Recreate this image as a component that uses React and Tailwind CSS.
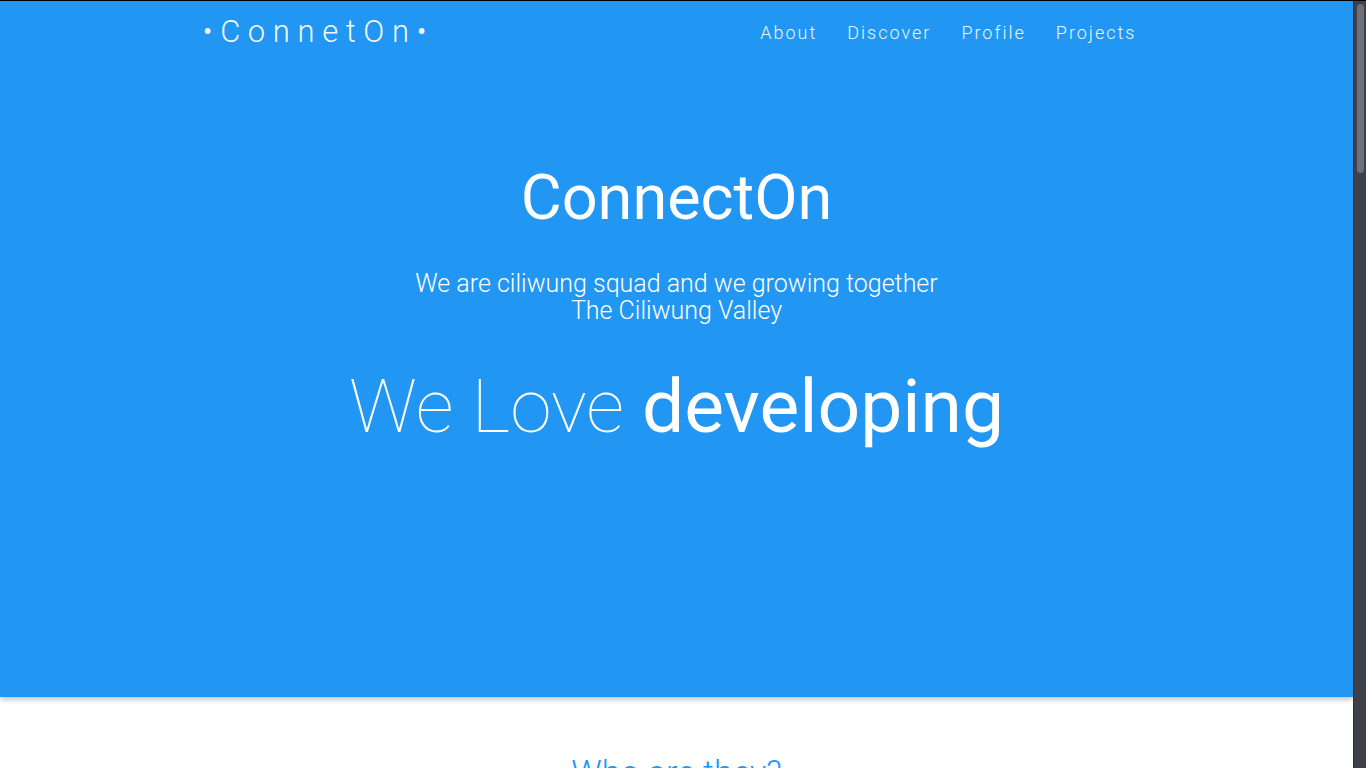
const links = ['About', 'Discover', 'Profile', 'Projects']

const members = [
  { name: 'Andi Pratama', role: 'Front-end Developer' },
  { name: 'Budi Santoso', role: 'Back-end Developer' },
  { name: 'Citra Lestari', role: 'UI/UX Designer' },
  { name: 'Dimas Saputra', role: 'Mobile Developer' },
  { name: 'Eka Wulandari', role: 'Project Manager' },
  { name: 'Fajar Nugroho', role: 'DevOps Engineer' },
]

const projects = [
  'Ciliwung Market',
  'Valley Chat',
  'Squad Tracker',
  'River Map',
  'Open Notes',
  'Grow Together',
]

const App = () => {
  return (
    <div className="flex h-screen flex-col bg-black font-['Roboto',sans-serif]">
      <div className="h-px shrink-0 bg-black" />
      <div className="flex min-h-0 flex-1">
        <div className="flex-1 overflow-y-scroll bg-white [scrollbar-width:none]">
          {/* hero */}
          <header className="relative z-10 h-[696px] bg-[#2196f3] text-white shadow-[0_2px_6px_rgba(0,0,0,0.28)]">
            <nav className="mx-auto flex h-[63px] w-[970px] items-center justify-between pr-[10px] pl-[11px]">
              <a className="text-[31px] font-light tracking-[7.6px] text-white/95">•ConnetOn•</a>
              <ul className="flex">
                {links.map((l) => (
                  <li key={l} className="px-[15px] text-[18px] font-light tracking-[2px] text-white/90">
                    {l}
                  </li>
                ))}
              </ul>
            </nav>

            <div className="flex flex-col items-center pt-[99px] text-center">
              <h1 className="text-[63px] leading-[70px] font-normal">ConnectOn</h1>
              <p className="mt-[38px] text-[25px] leading-[26.5px] font-light">
                We are ciliwung squad and we growing together
                <br />
                The Ciliwung Valley
              </p>
              <h2 className="mt-[41px] text-[75px] leading-[82px]">
                <span className="font-thin">We Love </span>
                <span className="font-normal">developing</span>
              </h2>
            </div>
          </header>

          {/* who */}
          <section className="pt-[56px] pb-24">
            <h2 className="text-center text-[34px] leading-[38px] font-light text-[#2196f3]">Who are they?</h2>
            <p className="mx-auto mt-6 w-[640px] text-center text-[16px] leading-7 font-light text-gray-600">
              A small group of friends from the banks of the Ciliwung river who love to code, design and build
              things together.
            </p>
            <div className="mx-auto mt-16 grid w-[970px] grid-cols-3 gap-8 px-[15px]">
              {members.map((m) => (
                <div key={m.name} className="flex flex-col items-center rounded bg-white p-8 shadow-[0_1px_4px_rgba(0,0,0,0.2)]">
                  <div className="h-32 w-32 rounded-full bg-[#bbdefb]" />
                  <h3 className="mt-6 text-[22px] font-normal text-gray-800">{m.name}</h3>
                  <p className="mt-1 text-[15px] font-light text-gray-500">{m.role}</p>
                </div>
              ))}
            </div>
          </section>

          {/* discover */}
          <section className="bg-[#f5f5f5] py-24">
            <h2 className="text-center text-[34px] leading-[38px] font-light text-[#2196f3]">Discover</h2>
            <div className="mx-auto mt-14 grid w-[970px] grid-cols-2 gap-10 px-[15px]">
              {['Learn', 'Share', 'Build', 'Grow'].map((t) => (
                <div key={t} className="h-[220px] rounded bg-white p-8 shadow-[0_1px_4px_rgba(0,0,0,0.15)]">
                  <h3 className="text-[24px] font-light text-gray-800">{t}</h3>
                  <p className="mt-4 text-[15px] leading-7 font-light text-gray-500">
                    Together we learn new things every week and share what we know with the rest of the squad.
                  </p>
                </div>
              ))}
            </div>
          </section>

          {/* projects */}
          <section className="py-24">
            <h2 className="text-center text-[34px] leading-[38px] font-light text-[#2196f3]">Projects</h2>
            <div className="mx-auto mt-14 grid w-[970px] grid-cols-3 gap-8 px-[15px]">
              {projects.map((p) => (
                <div key={p} className="overflow-hidden rounded bg-white shadow-[0_1px_4px_rgba(0,0,0,0.2)]">
                  <div className="h-[200px] bg-[#90caf9]" />
                  <div className="p-6">
                    <h3 className="text-[20px] text-gray-800">{p}</h3>
                    <p className="mt-2 text-[14px] font-light text-gray-500">Made with love by the Ciliwung squad.</p>
                  </div>
                </div>
              ))}
            </div>
          </section>

          <footer className="bg-[#1976d2] py-16 text-center text-[15px] font-light tracking-[1px] text-white">
            © ConnectOn · The Ciliwung Valley
          </footer>
        </div>

        {/* scrollbar */}
        <div className="flex w-[13px] shrink-0 flex-col border-l border-[#2c2e36] bg-[#3e414c] px-[2.5px] pt-[3px]">
          <div className="h-[169px] rounded-full bg-[#6c6f7b]" />
        </div>
      </div>
    </div>
  )
}

export default App
